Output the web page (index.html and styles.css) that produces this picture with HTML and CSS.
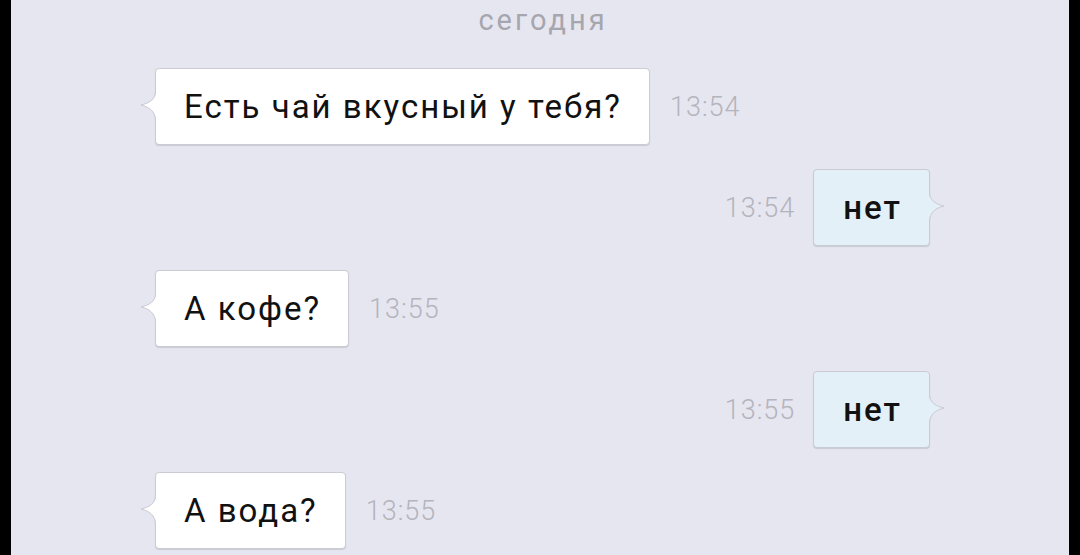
FILE: index.html
```html
<!DOCTYPE html>
<html lang="ru">
<head>
    <meta charset="UTF-8">
    <meta name="viewport" content="width=device-width, initial-scale=1.0">
    <title>Чат</title>
    <link rel="stylesheet" href="styles.css">
</head>
<body>
    <div class="screen">
        <div class="date">сегодня</div>

        <div class="row in">
            <div class="bubble">
                <svg class="tail" width="18" height="30" viewBox="0 0 18 30">
                    <path class="tail-fill" d="M16 0 C16 9 9 12 1 14 C9 16 16 20 16 30 L18 30 L18 0 Z"/>
                    <path class="tail-line" d="M15.5 0 C15.5 9 9 12 1 14 C9 16 15.5 20 15.5 30"/>
                </svg>
                Есть чай вкусный у тебя?
            </div>
            <span class="time">13:54</span>
        </div>

        <div class="row out">
            <span class="time">13:54</span>
            <div class="bubble">
                <svg class="tail" width="18" height="30" viewBox="0 0 18 30">
                    <path class="tail-fill" d="M16 0 C16 9 9 12 1 14 C9 16 16 20 16 30 L18 30 L18 0 Z"/>
                    <path class="tail-line" d="M15.5 0 C15.5 9 9 12 1 14 C9 16 15.5 20 15.5 30"/>
                </svg>
                нет
            </div>
        </div>

        <div class="row in">
            <div class="bubble">
                <svg class="tail" width="18" height="30" viewBox="0 0 18 30">
                    <path class="tail-fill" d="M16 0 C16 9 9 12 1 14 C9 16 16 20 16 30 L18 30 L18 0 Z"/>
                    <path class="tail-line" d="M15.5 0 C15.5 9 9 12 1 14 C9 16 15.5 20 15.5 30"/>
                </svg>
                А кофе?
            </div>
            <span class="time">13:55</span>
        </div>

        <div class="row out">
            <span class="time">13:55</span>
            <div class="bubble">
                <svg class="tail" width="18" height="30" viewBox="0 0 18 30">
                    <path class="tail-fill" d="M16 0 C16 9 9 12 1 14 C9 16 16 20 16 30 L18 30 L18 0 Z"/>
                    <path class="tail-line" d="M15.5 0 C15.5 9 9 12 1 14 C9 16 15.5 20 15.5 30"/>
                </svg>
                нет
            </div>
        </div>

        <div class="row in">
            <div class="bubble">
                <svg class="tail" width="18" height="30" viewBox="0 0 18 30">
                    <path class="tail-fill" d="M16 0 C16 9 9 12 1 14 C9 16 16 20 16 30 L18 30 L18 0 Z"/>
                    <path class="tail-line" d="M15.5 0 C15.5 9 9 12 1 14 C9 16 15.5 20 15.5 30"/>
                </svg>
                А вода?
            </div>
            <span class="time">13:55</span>
        </div>
    </div>
</body>
</html>
```

FILE: styles.css
```css
html, body {
    margin: 0;
    height: 100%;
    background: #000;
}
.screen {
    margin: 0 11px;
    height: 555px;
    overflow: hidden;
    background: #e6e6f1;
    display: flex;
    flex-direction: column;
    gap: 24px;
    font-family: Roboto, "Noto Sans", sans-serif;
}
.date {
    padding: 5px 0 9px 6px;
    text-align: center;
    font-size: 29px;
    line-height: 30px;
    letter-spacing: 3px;
    color: #a6a6ae;
}
.row {
    display: flex;
    align-items: center;
    gap: 20px;
}
.row.in {
    padding-left: 144px;
}
.row.out {
    justify-content: flex-end;
    padding-right: 139px;
    gap: 18px;
}
.bubble {
    position: relative;
    padding: 18px 27px 18px 28px;
    font-size: 33px;
    line-height: 39px;
    letter-spacing: 2px;
    color: #111;
    background: #fff;
    border: 1px solid #cbcbd3;
    border-radius: 4px;
    box-shadow: 0 1px 1px rgba(0, 0, 0, 0.12);
}
.out .bubble {
    background: #e3f0f8;
    font-weight: 500;
    padding: 18px 27px 18px 29px;
}
.tail {
    position: absolute;
    left: -16px;
    top: 22px;
    display: block;
}
.out .tail {
    left: auto;
    right: -16px;
    transform: scaleX(-1);
}
.tail-fill {
    fill: #fff;
}
.out .tail-fill {
    fill: #e3f0f8;
}
.tail-line {
    fill: none;
    stroke: #cbcbd3;
    stroke-width: 1;
}
.time {
    font-size: 27px;
    font-weight: 300;
    letter-spacing: 1px;
    color: #b4b4bc;
}
```
